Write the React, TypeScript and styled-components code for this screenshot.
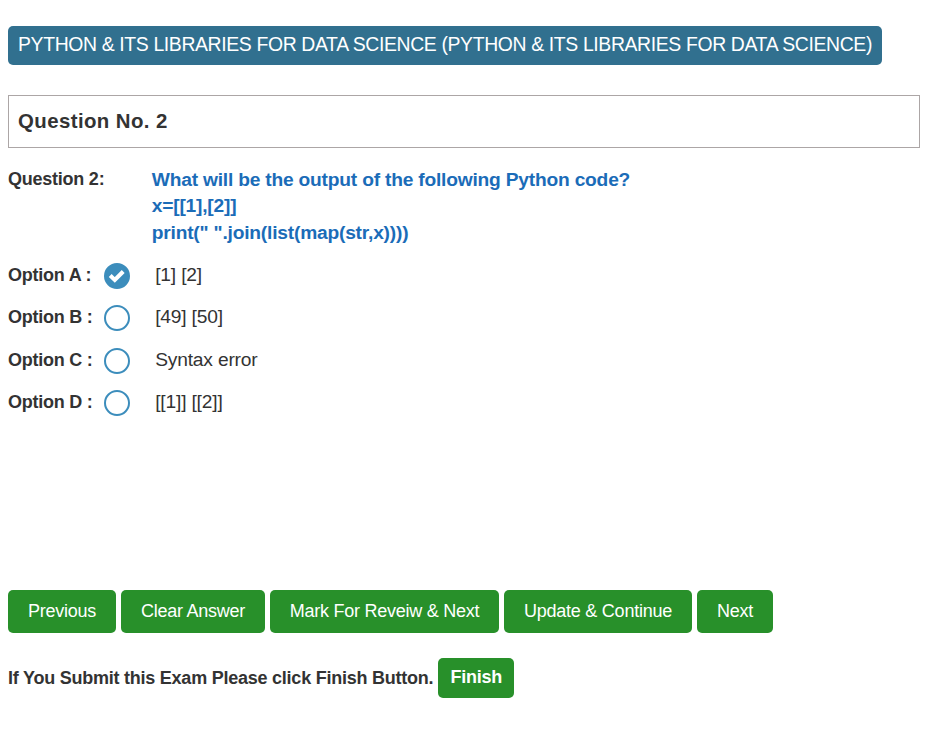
import React, { useState } from "react";
import styled, { createGlobalStyle } from "styled-components";

const GlobalStyle = createGlobalStyle`
  *, *::before, *::after { box-sizing: border-box; }
  body {
    margin: 0;
    background: #fff;
    color: #333;
    font-family: "Liberation Sans", Arial, sans-serif;
    font-size: 18px;
    line-height: 26px;
    letter-spacing: -0.237px;
  }
`;

const Page = styled.main`
  display: flex;
  flex-direction: column;
  align-items: flex-start;
  width: 920px;
  padding: 26px 0 0 8px;
`;

const SubjectTag = styled.h1`
  margin: 0 0 30px;
  width: 874px;
  height: 39px;
  padding: 0 0 2px 10px;
  border-radius: 5px;
  background: #31708f;
  color: #fff;
  font-size: 19.4px;
  font-weight: 400;
  line-height: 37px;
  letter-spacing: -0.36px;
  white-space: nowrap;
`;

const QuestionHeading = styled.h2`
  margin: 0 0 18px;
  width: 100%;
  height: 53px;
  padding-left: 9px;
  border: 1px solid #aca6a6;
  font-size: 20.4px;
  line-height: 51px;
  letter-spacing: 0.42px;
`;

const QuestionRow = styled.section`
  display: grid;
  grid-template-columns: 143.75px 1fr;
  width: 100%;
  height: 96px;
`;

const Label = styled.span`
  font-weight: 700;
`;

const QuestionText = styled.div`
  padding-top: 0.85px;
  color: #1b6cb8;
  font-size: 19.2px;
  font-weight: 700;
  line-height: 26.6px;
  letter-spacing: -0.205px;
  white-space: pre-line;
`;

const Options = styled.section`
  display: grid;
  grid-template-rows: 42px 43px 42px 42px;
  width: 100%;
  margin-bottom: 159px;
`;

const OptionRow = styled.label`
  display: grid;
  grid-template-columns: 96px 51.2px 1fr;
  align-items: start;
  cursor: pointer;
`;

const Radio = styled.input`
  position: absolute;
  opacity: 0;
  pointer-events: none;
`;

const Mark = styled.svg`
  display: block;
  width: 26px;
  height: 26px;
  margin-top: 1px;
`;

const Answer = styled.span`
  font-size: 19.2px;
  line-height: 25px;
  letter-spacing: -0.18px;
`;

const Actions = styled.nav`
  display: flex;
  gap: 5px;
  margin-bottom: 25px;
`;

const ActionButton = styled.button<{ $width: number }>`
  width: ${(p) => p.$width}px;
  height: 43px;
  padding: 0 0 1px;
  border: 0;
  border-radius: 5px;
  background: #28902a;
  color: #fff;
  font: 400 18px/26px "Liberation Sans", Arial, sans-serif;
  letter-spacing: -0.245px;
  white-space: nowrap;
`;

const FinishButton = styled(ActionButton)`
  height: 40px;
  padding: 0 0 2px 1px;
  font-weight: 700;
`;

const FinishRow = styled.footer`
  display: flex;
  align-items: center;
  gap: 4.4px;
`;

const options = [
  { key: "A", text: "[1] [2]" },
  { key: "B", text: "[49] [50]" },
  { key: "C", text: "Syntax error" },
  { key: "D", text: "[[1]] [[2]]" },
];

const actions = [
  { label: "Previous", width: 108 },
  { label: "Clear Answer", width: 144 },
  { label: "Mark For Reveiw & Next", width: 229 },
  { label: "Update & Continue", width: 188 },
  { label: "Next", width: 76 },
];

function OptionMark({ checked }: { checked: boolean }) {
  return (
    <Mark viewBox="0 0 26 26" aria-hidden="true">
      <circle cx="13" cy="13" r="12" fill={checked ? "#3c8dbc" : "#fff"} stroke="#3c8dbc" strokeWidth="2" />
      {checked && <path d="M6.2 12.5 10.8 16.9 19.2 8.5" fill="none" stroke="#fff" strokeWidth="4.1" />}
    </Mark>
  );
}

export default function App() {
  const [selected, setSelected] = useState("A");
  return (
    <>
      <GlobalStyle />
      <Page>
        <SubjectTag>PYTHON &amp; ITS LIBRARIES FOR DATA SCIENCE (PYTHON &amp; ITS LIBRARIES FOR DATA SCIENCE)</SubjectTag>
        <QuestionHeading>Question No. 2</QuestionHeading>
        <QuestionRow>
          <Label>Question 2:</Label>
          <QuestionText>{'What will be the output of the following Python code?\nx=[[1],[2]]\nprint(" ".join(list(map(str,x))))'}</QuestionText>
        </QuestionRow>
        <Options>
          {options.map((o) => (
            <OptionRow key={o.key}>
              <Label>Option {o.key} :</Label>
              <span>
                <Radio type="radio" name="answer" checked={selected === o.key} onChange={() => setSelected(o.key)} />
                <OptionMark checked={selected === o.key} />
              </span>
              <Answer>{o.text}</Answer>
            </OptionRow>
          ))}
        </Options>
        <Actions>
          {actions.map((a) => (
            <ActionButton key={a.label} $width={a.width}>{a.label}</ActionButton>
          ))}
        </Actions>
        <FinishRow>
          <Label>If You Submit this Exam Please click Finish Button.</Label>
          <FinishButton $width={76}>Finish</FinishButton>
        </FinishRow>
      </Page>
    </>
  );
}
